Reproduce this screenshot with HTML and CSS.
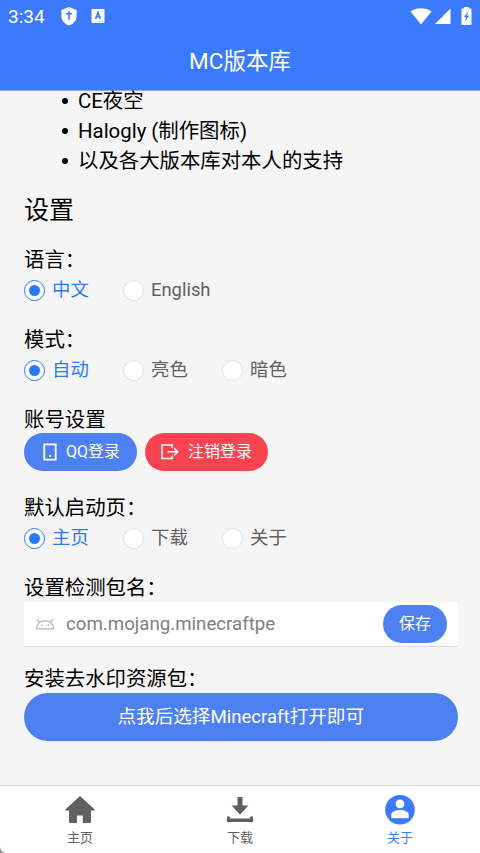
FILE: index.html
```html
<!DOCTYPE html>
<html lang="zh-CN">
<head>
<meta charset="utf-8">
<title>MC版本库</title>
<link rel="stylesheet" href="styles.css">
</head>
<body>
<div class="app">
  <header class="header">
    <div class="status">
      <span class="clock">3:34</span>
      <svg class="shield" width="16" height="19" viewBox="0 0 16 19"><path fill="#fff" d="M8 0 15.600 3v6c0 4.500-3 7.900-7.600 9.500C3.400 16.900.4 13.500.4 9V3z"/><path d="M8 4v9M5 6.800h6" stroke="#3b7aff" stroke-width="1.500"/></svg>
      <svg class="lang" width="14" height="14" viewBox="0 0 14 14"><rect x=".5" width="13" height="14" rx="1" fill="#fff"/><path d="M4.500 10 7 3.500 9.500 10M5.400 7.800h3.200" fill="none" stroke="#3b7aff" stroke-width="1.600"/><path d="M7.500 12.300h5" stroke="#9dbcff" stroke-width=".8"/></svg>
      <span class="grow"></span>
      <svg class="wifi" width="22" height="17" viewBox="0 0 22 17"><path fill="#fff" d="M.5 3.500C6.500-.9 15.500-.9 21.500 3.500L11 16.500z"/></svg>
      <svg class="signal" width="16" height="16" viewBox="0 0 16 16"><path fill="#fff" d="M15.500.5V16H0z"/></svg>
      <svg class="battery" width="11" height="18" viewBox="0 0 11 18"><path fill="#fff" d="M3 0h5v1.500h1.500q1 0 1 1V17q0 1-1 1h-8q-1 0-1-1V2.500q0-1 1-1H3z"/><path fill="#3b7aff" d="M7 4.500 3 10h2l-.8 4.500L8 8.800H6z"/></svg>
    </div>
    <h1 class="title">MC版本库</h1>
  </header>

  <main class="content">
    <ul class="credits">
      <li>CE夜空</li>
      <li>Halogly (制作图标)</li>
      <li>以及各大版本库对本人的支持</li>
    </ul>
    <h2 class="heading">设置</h2>

    <section class="group">
      <div class="label">语言：</div>
      <div class="radios">
        <div class="radio on"><i></i>中文</div>
        <div class="radio"><i></i>English</div>
      </div>
    </section>
    <section class="group">
      <div class="label">模式：</div>
      <div class="radios">
        <div class="radio on"><i></i>自动</div>
        <div class="radio"><i></i>亮色</div>
        <div class="radio"><i></i>暗色</div>
      </div>
    </section>
    <section class="group account">
      <div class="label">账号设置</div>
      <div class="buttons">
        <button class="btn qq"><svg width="14" height="18" viewBox="0 0 14 18" fill="none" stroke="#fff"><path stroke-width="1.800" d="M1.300 1.300h11.400v15.400H1.300z"/><path stroke-width="1.800" d="M6.200 13h1.800"/></svg>QQ登录</button>
        <button class="btn logout"><svg width="18" height="16" viewBox="0 0 18 16" fill="none" stroke="#fff" stroke-width="1.500"><path d="M11.300 4V1H1v13.500h10.300v-3M6.500 7.800h10M13.200 4.300l3.500 3.500-3.500 3.500"/></svg>注销登录</button>
      </div>
    </section>
    <section class="group">
      <div class="label">默认启动页：</div>
      <div class="radios">
        <div class="radio on"><i></i>主页</div>
        <div class="radio"><i></i>下载</div>
        <div class="radio"><i></i>关于</div>
      </div>
    </section>
    <section class="group package">
      <div class="label">设置检测包名：</div>
      <div class="field">
        <svg width="20" height="12" viewBox="0 0 20 12" fill="none" stroke="#b4b4b4" stroke-width="1.200"><path d="M1.500 10.800C1.500 5.500 5 2.800 10 2.800s8.500 2.700 8.500 8zM4.300 4.300 2 1M15.700 4.300 18 1"/><path stroke-width="1.400" d="M6 7.300h1.400M12.600 7.300H14"/></svg>
        <span class="value">com.mojang.minecraftpe</span>
        <button class="btn save">保存</button>
      </div>
    </section>
    <section class="group">
      <div class="label">安装去水印资源包：</div>
      <button class="btn install">点我后选择Minecraft打开即可</button>
    </section>
  </main>

  <nav class="tabs">
    <div class="tab"><svg width="30" height="30" viewBox="0 0 30 30"><path fill="#606060" d="M15 1 .3 14.600q-.5 1 .7 1H4v10.900q0 1.500 1.500 1.500H12v-7.500h5.800V28h6.700q1.500 0 1.500-1.500V15.600h3q1.200 0 .7-1z"/></svg>主页</div>
    <div class="tab"><svg width="30" height="30" viewBox="0 0 30 30"><path fill="#606060" d="M12.500 2h5v8.500h6L15 19.500l-8.500-9h6zM2 21.500h3v2h20v-2h3V27H2z"/></svg>下载</div>
    <div class="tab active"><svg width="30" height="30" viewBox="0 0 30 30"><circle cx="15" cy="14.800" r="14.800" fill="#3b7aff"/><circle cx="15" cy="8.800" r="4.400" fill="#fff"/><path fill="#fff" d="M6.300 23.200v-3.700c0-2.500 4.300-4.500 8.700-4.500s8.700 2 8.700 4.500v3.700z"/></svg>关于</div>
  </nav>
  <svg class="corner" width="6" height="6" viewBox="0 0 6 6"><path fill="#999" d="M0 0q1 5 6 6H0z"/></svg>
</div>
</body>
</html>
```
FILE: styles.css
```css
* { box-sizing: border-box; }
body { margin: 0; font-family: Roboto, "Noto Sans CJK SC", sans-serif; color: #000; background: #f5f5f5; }
svg { display: block; flex: none; }
.app { position: relative; height: 853px; display: flex; flex-direction: column; overflow: hidden; }
.header { flex: none; height: 91px; background: #3b7aff; color: #fff; border-bottom: 1px solid #82aaff; }
.status { display: flex; align-items: center; height: 32px; padding: 0 8px; }
.clock { width: 37px; font-size: 19px; white-space: nowrap; padding-top: 1px; }
.shield { margin-left: 16px; }
.lang { margin-left: 14px; }
.grow { flex: 1; }
.signal { margin-left: 3px; }
.battery { margin-left: 10px; }
.title { margin: 0; height: 58px; line-height: 58px; text-align: center; font-size: 22.500px; font-weight: 400; }
.content { flex: 1; min-height: 0; padding: 0 22.500px 0 24px; }
.credits { list-style: none; margin: -5px 0 0; padding: 0 0 0 54px; font-size: 20.400px; line-height: 30px; }
.credits li { display: flex; align-items: center; height: 30px; white-space: nowrap; }
.credits li::before { content: ""; width: 6px; height: 6px; border-radius: 50%; background: #000; margin: 0 10px 0 -16px; }
.heading { margin: 15px 0 13px; height: 40px; line-height: 40px; font-size: 25px; font-weight: 400; }
.group { margin-bottom: 18px; }
.label { height: 30px; line-height: 32px; font-size: 20.400px; white-space: nowrap; }
.radios { display: flex; height: 32px; }
.radio { display: flex; align-items: center; width: 99px; padding-bottom: 1px; font-size: 18.400px; line-height: 27px; color: #606060; white-space: nowrap; }
.radio i { display: flex; align-items: center; justify-content: center; flex: none; width: 21px; height: 21px; margin: 1px 7px 0 0; border: 1px solid #dcdfe6; border-radius: 50%; background: #fff; }
.on { color: #2979ff; }
.on i { border-color: #2979ff; }
.on i::after { content: ""; width: 11px; height: 11px; border-radius: 50%; background: #2979ff; }
.btn { display: flex; align-items: center; justify-content: center; margin: 0; padding: 0 0 4px; border: 0; border-radius: 24px; background: #4d80f0; color: #fff; font-family: inherit; font-size: 16px; height: 38px; white-space: nowrap; }
.btn svg { margin-top: 3px; }
.account { margin-bottom: 21px; }
.buttons { display: flex; gap: 8px; margin-top: -1px; }
.qq { width: 113px; gap: 9px; padding-left: 2px; }
.logout { width: 123px; gap: 9px; background: #fa4350; }
.package { margin-bottom: 16px; }
.field { display: flex; align-items: center; height: 45px; padding: 0 10.500px 0 11px; background: #fff; border-bottom: 1px solid #dadada; }
.value { flex: 1; margin: 0 0 0 11px; font-size: 18.700px; color: #808080; }
.save { width: 64px; }
.install { width: 100%; height: 48px; padding-bottom: 5px; font-size: 18.600px; }
.tabs { flex: none; display: flex; height: 68px; background: #fff; border-top: 1px solid #d8d8d8; }
.tab { flex: 1; display: flex; flex-direction: column; align-items: center; padding-top: 9px; font-size: 13px; line-height: 26px; color: #606060; }
.active { color: #3b7aff; }
.corner { position: absolute; left: 0; bottom: 0; }
```
